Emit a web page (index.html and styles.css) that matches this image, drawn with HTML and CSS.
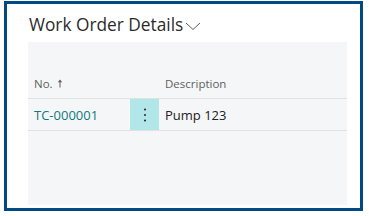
FILE: index.html
```html
<!DOCTYPE html>
<html>
<head>
<meta charset="utf-8">
<link rel="stylesheet" href="styles.css">
</head>
<body>
<div class="frame">
  <div class="title-row">
    <span class="title">Work Order Details</span>
    <svg class="chev" width="16" height="10" viewBox="0 0 16 10"><path d="M1 2 L8 8.5 L15 2" fill="none" stroke="#605e5c" stroke-width="1"/></svg>
  </div>
  <div class="panel">
    <div class="row head">
      <div class="c-no">No. <svg class="arrow" width="6" height="9" viewBox="0 0 6 9"><path d="M3 8.5 V1.5" stroke="#615f5d" stroke-width="1" fill="none"/><path d="M0.8 3.2 L3 0.6 L5.2 3.2 Z" fill="#615f5d"/></svg></div>
      <div class="c-menu"></div>
      <div class="c-desc">Description</div>
    </div>
    <div class="row data">
      <div class="c-no link">TC-000001</div>
      <div class="c-menu sel">
        <svg width="4" height="16" viewBox="0 0 4 16"><circle cx="2" cy="2.5" r="1.1" fill="#323130"/><circle cx="2" cy="8" r="1.1" fill="#323130"/><circle cx="2" cy="13.5" r="1.1" fill="#323130"/></svg>
      </div>
      <div class="c-desc">Pump 123</div>
    </div>
  </div>
</div>
</body>
</html>
```
FILE: styles.css
```css
html, body { margin: 0; padding: 0; background: #fff; }
body { font-family: "Segoe UI", "Open Sans", "Noto Sans", sans-serif; color: #212121; }
.frame {
  margin: 1px 0 0 4px;
  width: 353px;
  height: 204px;
  border: 3px solid #004a84;
  display: flex;
  flex-direction: column;
}
.title-row {
  height: 38px;
  display: flex;
  align-items: center;
  padding-left: 22px;
  padding-top: 3px;
  box-sizing: border-box;
}
.title { font-size: 17.3px; color: #2b2b2b; }
.chev { margin-left: 2px; margin-top: 2px; }
.panel {
  flex: 1;
  margin: 0 13px 3px 21px;
  background: #f5f6f8;
}
.row { display: flex; border-bottom: 1px solid #e1e1e3; }
.head { height: 56px; align-items: flex-end; font-size: 11.5px; color: #615f5d; }
.head > div { padding-bottom: 7px; }
.data { height: 31px; align-items: stretch; font-size: 13px; color: #222; }
.data > div { display: flex; align-items: center; }
.c-no { width: 96px; padding-left: 6px; }
.c-menu { width: 29px; justify-content: center; }
.c-desc { padding-left: 6px; }
.sel { background: #b2e7ea; }
.link { color: #0f7a7e; }
.arrow { vertical-align: -0px; margin-left: 1px; }
```
